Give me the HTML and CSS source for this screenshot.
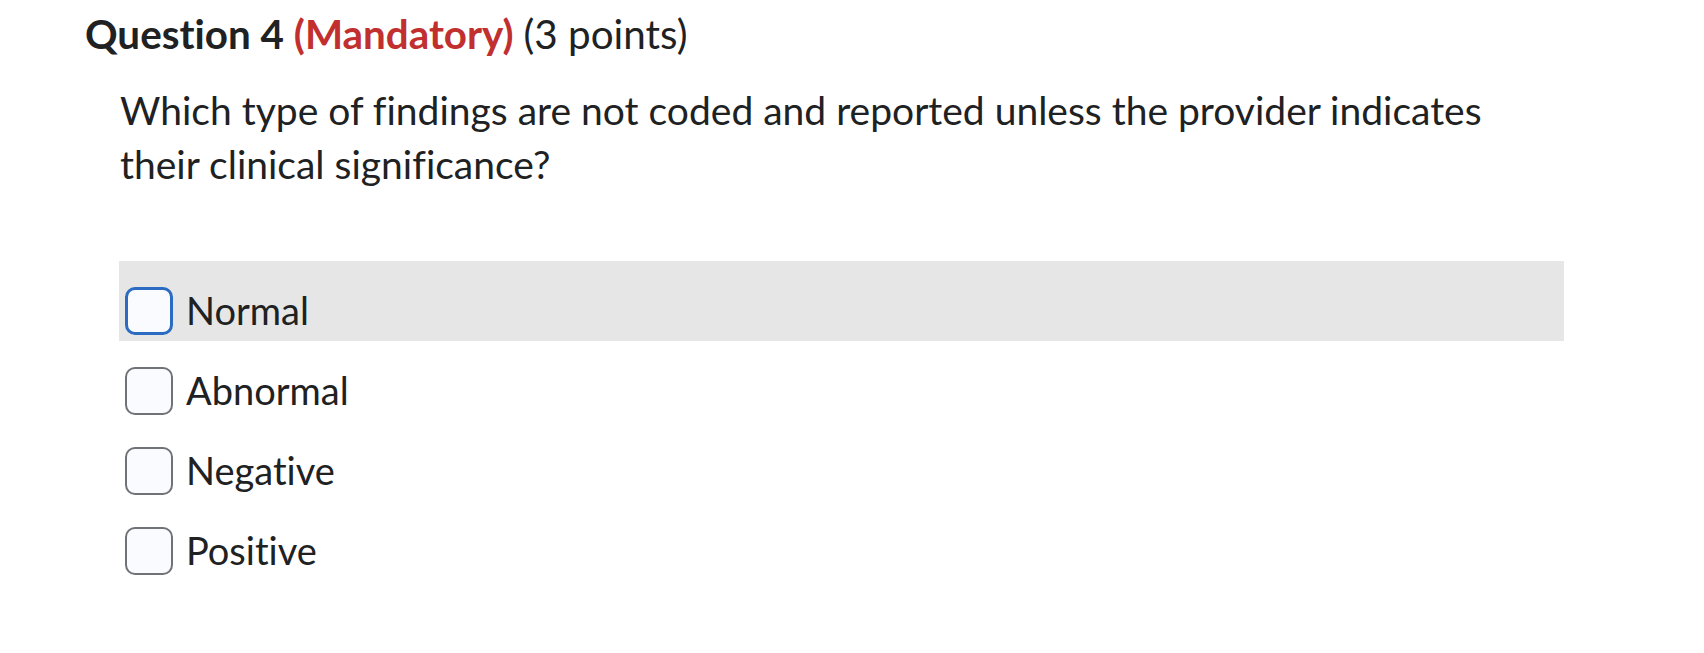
FILE: index.html
```html
<!DOCTYPE html>
<html lang="en">
<head>
  <meta charset="UTF-8">
  <title>Question 4</title>
  <link rel="stylesheet" href="styles.css">
</head>
<body>

<!-- Question -->
<div class="question">
  <h2 class="question-title">Question 4 <span class="mandatory">(Mandatory)</span> <span class="points">(3 points)</span></h2>

  <p class="question-text">Which type of findings are not coded and reported unless the provider indicates their clinical significance?</p>

  <div class="options">
    <label class="option hover">
      <span class="box focus"></span>
      <span class="option-label">Normal</span>
    </label>
    <label class="option">
      <span class="box"></span>
      <span class="option-label">Abnormal</span>
    </label>
    <label class="option">
      <span class="box"></span>
      <span class="option-label">Negative</span>
    </label>
    <label class="option">
      <span class="box"></span>
      <span class="option-label">Positive</span>
    </label>
  </div>
</div>

</body>
</html>
```

FILE: styles.css
```css
body {
  font-family: 'Lato', 'Liberation Sans', sans-serif;
  font-variant-ligatures: none;
  margin: 0;
  padding: 0;
  background-color: #fff;
  color: #202122;
}
.question {
  padding: 10px 0 0 85px;
  width: 1479px;
}
.question-title {
  font-size: 40.4px;
  font-weight: 700;
  line-height: 48px;
  margin: 0;
}
.mandatory {
  color: #c1302f;
}
.points {
  font-weight: 400;
}
.question-text {
  font-size: 39px;
  line-height: 54px;
  margin: 25px 0 0 35px;
  width: 1410px;
}
.options {
  margin: 70px 0 0 34px;
}
.option {
  display: flex;
  height: 80px;
  padding: 26px 0 6px 6px;
  box-sizing: border-box;
  align-items: flex-start;
}
.option.hover {
  background-color: #e6e6e6;
}
.box {
  width: 48px;
  height: 48px;
  box-sizing: border-box;
  border: 2px solid #6f7378;
  border-radius: 10px;
  background-color: #f9fbff;
  flex-shrink: 0;
}
.box.focus {
  border: 3px solid #2b6cc2;
}
.option-label {
  font-size: 38px;
  line-height: 46px;
  margin-left: 13px;
}
```
